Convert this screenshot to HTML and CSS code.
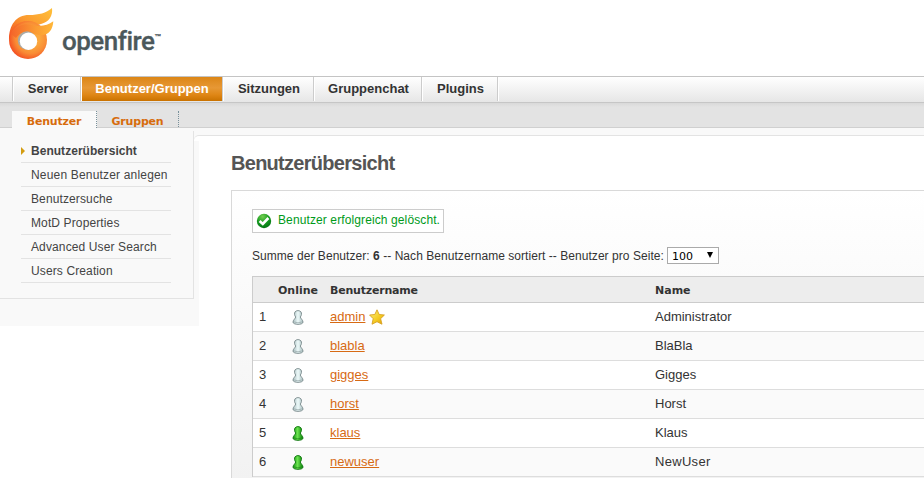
FILE: index.html
```html
<!DOCTYPE html>
<html lang="de">
<head>
<meta charset="utf-8">
<title>Openfire</title>
<link rel="stylesheet" href="styles.css">
</head>
<body>
<svg width="0" height="0" class="defs">
  <defs>
    <linearGradient id="grey" x1="0" x2="1"><stop offset="0" stop-color="#a9bdbf"/><stop offset=".5" stop-color="#edfafa"/><stop offset="1" stop-color="#a9bebf"/></linearGradient>
    <linearGradient id="green" x1="0" x2="1"><stop offset="0" stop-color="#149314"/><stop offset=".45" stop-color="#6be34f"/><stop offset="1" stop-color="#078007"/></linearGradient>
    <g id="pawn"><path d="M3.200 7C1.900 5.400 1.600 3.300 2.600 1.800C4.200.2 6.800.2 8.400 1.800C9.400 3.300 9.100 5.400 7.800 7C8.200 8.700 10.500 10 10.500 12.100C10.500 15.100 .5 15.100 .5 12.100C.5 10 2.800 8.700 3.200 7Z"/><path d="M2 12Q5.500 13.600 9 12" fill="none" stroke-width=".5"/></g>
  </defs>
</svg>
<header class="header">
  <svg class="flame" width="48" height="54" viewBox="0 0 48 54">
    <defs>
      <radialGradient id="ring" gradientUnits="userSpaceOnUse" cx="23" cy="31" r="24"><stop offset=".35" stop-color="#fba83e"/><stop offset=".65" stop-color="#f98c35"/><stop offset="1" stop-color="#f2421e"/></radialGradient>
      <linearGradient id="tail" x1="0" y1="1" x2="1" y2="0"><stop offset="0" stop-color="#f14a20"/><stop offset=".5" stop-color="#fb9a2f"/><stop offset="1" stop-color="#ffc13a"/></linearGradient>
      <linearGradient id="tail2" x1="0" x2="1"><stop offset="0" stop-color="#f4652a"/><stop offset=".6" stop-color="#fb9c33"/><stop offset="1" stop-color="#ffb739"/></linearGradient>
    </defs>
    <path d="M1 33C1 18 8 8 21 8C31 8 38 6 44 1C45 9 41 15 33 17L20 20L5 27Z" fill="url(#tail)"/>
    <circle cx="20" cy="33" r="19" fill="url(#ring)"/>
    <path d="M3 27C10 16 18 16 26 18.500C34 20 40 18 45.300 14.300C45 22 41 28.500 33 28.200C27 28 23 25 19 25C14 25 11 27 8 31Z" fill="url(#tail2)"/>
    <circle cx="19" cy="33.500" r="9.200" fill="#a9aaa8"/>
    <circle cx="20.500" cy="34.200" r="8.700" fill="#fff"/>
  </svg>
  <span class="brand">openfire</span><span class="tm">™</span>
</header>
<nav class="tabs">
  <a class="tab t1">Server</a><a class="tab t2 on">Benutzer/Gruppen</a><a class="tab t3">Sitzungen</a><a class="tab t4">Gruppenchat</a><a class="tab t5">Plugins</a><span class="rest"></span>
</nav>
<nav class="subtabs"><a class="sub here">Benutzer</a><a class="sub">Gruppen</a></nav>
<div class="page">
  <aside class="side">
    <ul class="menu">
      <li class="current"><span>Benutzerübersicht</span></li>
      <li class="wide">Neuen Benutzer anlegen</li>
      <li>Benutzersuche</li>
      <li>MotD Properties</li>
      <li>Advanced User Search</li>
      <li>Users Creation</li>
    </ul>
  </aside>
  <main class="main">
    <h1>Benutzerübersicht</h1>
    <section class="box">
      <div class="success">
        <svg width="16" height="16" viewBox="0 0 16 16"><defs><radialGradient id="ok" cx=".4" cy=".2" r=".9"><stop offset="0" stop-color="#72ce4f"/><stop offset=".5" stop-color="#159a20"/><stop offset="1" stop-color="#006a12"/></radialGradient></defs><circle cx="8" cy="8" r="7.200" fill="url(#ok)"/><path d="M3.600 8L6.800 11L12.400 5" fill="none" stroke="#fff" stroke-width="2.600"/></svg>
        <span>Benutzer erfolgreich gelöscht.</span>
      </div>
      <div class="summary"><span class="sum">Summe der Benutzer: <b>6</b> -- Nach Benutzername sortiert -- Benutzer pro Seite:</span><span class="select"><span>100</span><i></i></span></div>
      <div class="table">
        <div class="row head"><span></span><span class="c">Online</span><span class="tight">Benutzername</span><span>Name</span></div>
        <div class="row"><span>1</span><svg class="pawn off" viewBox="0 0 11 15"><use href="#pawn"/></svg><span><a>admin</a><svg class="star" width="16" height="16" viewBox="0 0 16 16"><defs><linearGradient id="gold" x2="1" y2="1"><stop offset="0" stop-color="#fff37c"/><stop offset=".6" stop-color="#f3c91f"/><stop offset="1" stop-color="#d99a0e"/></linearGradient></defs><path d="M8 .8L10.200 5.500L15.400 6L11.600 9.700L13 15.200L8 12.700L3 15.200L4.200 9.700L.6 6L5.800 5.500Z" fill="url(#gold)" stroke="#d8a021" stroke-width=".9"/></svg></span><span>Administrator</span></div>
        <div class="row"><span>2</span><svg class="pawn off" viewBox="0 0 11 15"><use href="#pawn"/></svg><span><a>blabla</a></span><span>BlaBla</span></div>
        <div class="row"><span>3</span><svg class="pawn off" viewBox="0 0 11 15"><use href="#pawn"/></svg><span><a>gigges</a></span><span>Gigges</span></div>
        <div class="row"><span>4</span><svg class="pawn off" viewBox="0 0 11 15"><use href="#pawn"/></svg><span><a>horst</a></span><span>Horst</span></div>
        <div class="row"><span>5</span><svg class="pawn live" viewBox="0 0 11 15"><use href="#pawn"/></svg><span><a>klaus</a></span><span>Klaus</span></div>
        <div class="row"><span>6</span><svg class="pawn live" viewBox="0 0 11 15"><use href="#pawn"/></svg><span><a>newuser</a></span><span class="loose">NewUser</span></div>
      </div>
    </section>
  </main>
</div>
</body>
</html>
```
FILE: styles.css
```css
* { box-sizing: border-box; }
html, body { height: 478px; overflow: hidden; }
body { margin: 0; background: #fff; color: #333; font: 12px "Liberation Sans", Arial, sans-serif; }
.defs { position: absolute; }
.header { height: 76px; display: flex; align-items: flex-start; padding: 7px 0 0 8px; }
.flame { display: block; }
.brand { font: 500 26px/34px Roboto, "Liberation Sans", sans-serif; color: #4b585b; margin: 17px 0 0 6px; letter-spacing: -.5px; -webkit-text-stroke: .3px #4b585b; }
.tm { font: bold 7px/8px "Liberation Sans", sans-serif; color: #4b585b; margin-top: 26px; -webkit-text-stroke: .2px #4b585b; }
.tabs { height: 27px; display: flex; padding-left: 12px; border-top: 1px solid #c4c4c4; border-bottom: 1px solid #c6c6c6; background: linear-gradient(#fff, #e6e6e6); }
.tab { height: 24px; border-left: 1px solid #ccc; box-shadow: inset 1px 0 #fff; text-align: center; padding-left: 2px; font: bold 13px/23px "Liberation Sans", Arial, sans-serif; color: #333; }
.t1 { width: 69px; border-right: 1px solid #ccc; padding-left: 3px; }
.t2 { width: 141px; }
.t3 { width: 91px; }
.t4 { width: 108px; }
.t5 { width: 76px; }
.rest { height: 24px; border-left: 1px solid #ccc; box-shadow: inset 1px 0 #fff; width: 2px; }
.tab.on { color: #fff; border-left: 1px solid #fff; padding-left: 0; background: linear-gradient(#dc8617, #e79835 45%, #df8615 75%, #c97200); box-shadow: none; }
.subtabs { height: 25px; display: flex; padding: 8px 0 0 12px; background: linear-gradient(#d9d9d9, #e3e3e3 4px); border-bottom: 1px solid #d0d0d0; }
.sub { height: 16px; border-right: 1px dotted #78909a; color: #d76c0d; font: bold 11px/21px "DejaVu Sans", Verdana, sans-serif; letter-spacing: -.2px; width: 82px; text-align: center; white-space: nowrap; }
.sub.here { width: 85px; height: 17px; background: #f9f9f9; }
.page { display: flex; align-items: flex-start; height: 350px; background: linear-gradient(#f9f9f9, #f9f9f9) 0 0 / 199px 198px no-repeat, linear-gradient(#f9f9f9, #f9f9f9) 0 0 / 100% 7px no-repeat; }
.side { width: 194px; height: 168px; margin-top: 3px; border-right: 1px solid #e3e3e3; border-bottom: 1px solid #e3e3e3; }
.menu { list-style: none; margin: 8px 0 0 21px; padding: 0; width: 150px; }
.menu li { height: 24px; border-bottom: 1px solid #e3e3e3; padding-left: 10px; line-height: 25px; color: #444; white-space: nowrap; letter-spacing: .12px; }
.menu .wide { letter-spacing: .18px; }
.menu .current { font-weight: bold; display: flex; align-items: center; padding: 0; letter-spacing: .03px; }
.current span { padding-top: 2px; }
.current::before { content: ""; border: 4px solid transparent; border-left-color: #d39c10; border-right: 0; margin-right: 6px; }
.main { flex: 1; height: 343px; margin-top: 7px; border-top: 1px solid #e3e3e3; border-top-left-radius: 5px; padding-left: 37px; background: linear-gradient(#f9f9f9, #f9f9f9) 0 5px / 5px 185px no-repeat, #fff; }
h1 { margin: 15px 0 0; font: bold 20px/24px "Liberation Sans", Arial, sans-serif; color: #555; letter-spacing: -.72px; }
.box { height: 300px; margin-top: 15px; border: 1px solid #d9d9d9; border-right: 0; padding: 18px 0 0 20px; background: linear-gradient(#fff, #f2f2f2 290px); }
.success { display: flex; align-items: center; width: 192px; height: 24px; border: 1px solid #ccc; background: #fff; padding-left: 3px; color: #009a1a; }
.success span { margin: -2px 0 0 6px; white-space: nowrap; letter-spacing: .11px; }
.summary { display: flex; align-items: center; height: 19px; margin-top: 13px; }
.sum { white-space: nowrap; width: 415px; letter-spacing: .05px; }
.select { display: flex; align-items: center; justify-content: space-between; width: 52px; height: 17px; border: 1px solid #aaa; background: #fff; color: #000; font: 11px "DejaVu Sans", Verdana, sans-serif; padding: 0 5px 0 4px; }
.select span { padding-top: 2px; }
.select i { border: 3.5px solid transparent; border-top: 6px solid #000; border-bottom: 0; margin-top: -2px; }
.table { margin-top: 11px; border-top: 1px solid #ccc; border-left: 1px solid #ccc; font-size: 13px; }
.row { display: grid; grid-template-columns: 19px 52px 325px 1fr; align-items: center; height: 29px; padding-left: 6px; border-bottom: 1px solid #ddd; background: #fff; }
.row:nth-child(odd) { background: #fafafa; }
.row > span { padding-bottom: 2px; }
.row.head { height: 26px; background: #ededed; border-color: #ccc; font: bold 11px "DejaVu Sans", Verdana, sans-serif; }
.row.head > span { padding: 2px 0 0; }
.tight { letter-spacing: -.2px; }
.loose { letter-spacing: .3px; }
.row > span:nth-child(3) { display: flex; align-items: center; }
.row a { color: #d76a14; text-decoration: underline; text-underline-offset: 1px; }
.c { text-align: center; width: 40px; }
.pawn { width: 12px; height: 15px; margin-left: 14px; }
.off { fill: url(#grey); stroke: #768789; stroke-width: .9; }
.live { fill: url(#green); stroke: #087208; stroke-width: .9; }
.star { margin: 1px 0 -1px 4px; }
```
